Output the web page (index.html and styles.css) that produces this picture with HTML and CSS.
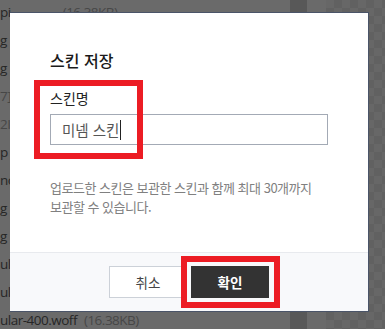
FILE: index.html
```html
<!DOCTYPE html>
<html lang="ko">
<head>
<meta charset="utf-8">
<title>스킨 저장</title>
<link rel="stylesheet" href="styles.css">
</head>
<body>
<div class="page">
  <ul class="files">
    <li><span class="name">pi</span><span class="size first">(16.38KB)</span></li>
    <li><span class="name">g</span></li>
    <li><span class="name">g</span></li>
    <li><span class="size">7]</span></li>
    <li><span class="size">2I</span></li>
    <li><span class="name">p</span></li>
    <li><span class="name">no</span></li>
    <li><span class="name">g</span></li>
    <li><span class="name">g</span></li>
    <li><span class="name">ul</span></li>
    <li><span class="name">ul</span></li>
    <li><span class="name">ular-400.woff</span><span class="size">(16.38KB)</span></li>
  </ul>
  <div class="strip"></div>
  <div class="gap"></div>
  <div class="checker"></div>
</div>

<div class="modal">
  <div class="modal-body">
    <h2 class="title">스킨 저장</h2>
    <div class="field">
      <label class="label">스킨명</label>
      <div class="input"><span class="value">미넴 스킨</span><span class="caret"></span></div>
    </div>
    <p class="help">업로드한 스킨은 보관한 스킨과 함께 최대 30개까지<br>보관할 수 있습니다.</p>
  </div>
  <div class="modal-footer">
    <button class="btn btn-cancel">취소</button>
    <button class="btn btn-ok">확인</button>
  </div>
</div>

<div class="mark mark-name"></div>
<div class="mark mark-ok"></div>
</body>
</html>
```

FILE: styles.css
```css
* { box-sizing: border-box; }

html, body {
  margin: 0;
  padding: 0;
}

body {
  width: 385px;
  height: 329px;
  overflow: hidden;
  background: #6a6a6a;
  font-family: "Noto Sans CJK KR", "Noto Sans", sans-serif;
  position: relative;
}

.page {
  display: flex;
  height: 329px;
}

.files {
  list-style: none;
  margin: -2px 0 0;
  padding: 0;
  width: 290px;
  font-family: "Open Sans", "Noto Sans", sans-serif;
  font-size: 13.5px;
  letter-spacing: -0.5px;
}

.files li {
  height: 28px;
  line-height: 28px;
  white-space: nowrap;
}

.files .name { color: #262626; }
.files .size { color: #474747; margin-left: 7px; }
.files li .size:first-child { margin-left: 0; }
.files .first { margin-left: 52px; }

.strip {
  width: 17px;
  background: #585858;
}

.gap {
  width: 19px;
}

.checker {
  flex: 1;
  background-color: #676767;
  background-image: conic-gradient(#616161 0 25%, transparent 0 50%, #616161 0 75%, transparent 0);
  background-size: 16px 16px;
}

.modal {
  position: absolute;
  left: 10px;
  top: 12px;
  width: 359px;
  height: 300px;
  background: #fff;
  border-top: 1px solid #4a5468;
  border-right: 1px solid #4a5468;
  border-bottom: 1px solid #4a5468;
  display: flex;
  flex-direction: column;
}

.modal-body {
  flex: 1;
  padding: 35px 40px 0;
}

.title {
  margin: 0;
  font-size: 16px;
  line-height: 24px;
  font-weight: 500;
  color: #1a1a1a;
}

.field {
  margin-top: 16px;
}

.label {
  display: block;
  font-size: 14px;
  line-height: 20px;
  font-weight: 400;
  color: #222;
}

.input {
  margin-top: 6px;
  width: 278px;
  height: 31px;
  border: 1px solid #a3aab5;
  padding-left: 11px;
  display: flex;
  align-items: center;
  font-size: 14.5px;
  color: #555;
}

.caret {
  width: 1px;
  height: 20px;
  background: #222;
  margin-left: 1px;
}

.help {
  margin: 33px 0 0;
  font-size: 13px;
  line-height: 19px;
  letter-spacing: -0.5px;
  color: #808080;
}

.modal-footer {
  height: 59px;
  border-top: 1px solid #e8eaee;
  background: #f8f9fb;
  display: flex;
  justify-content: center;
  align-items: flex-start;
  gap: 4px;
  padding-top: 13px;
}

.btn {
  width: 78px;
  height: 32px;
  font-family: "Noto Sans CJK KR", sans-serif;
  font-size: 13.5px;
  cursor: pointer;
  padding: 0;
}

.btn-cancel {
  background: #fff;
  border: 1px solid #ccd1d8;
  color: #444;
}

.btn-ok {
  background: #333;
  border: 1px solid #333;
  color: #fff;
  font-weight: 700;
}

.mark {
  position: absolute;
  border: 6px solid #ec1c24;
}

.mark-name {
  left: 34px;
  top: 80px;
  width: 109px;
  height: 79px;
}

.mark-ok {
  left: 181px;
  top: 256px;
  width: 99px;
  height: 52px;
}
```
